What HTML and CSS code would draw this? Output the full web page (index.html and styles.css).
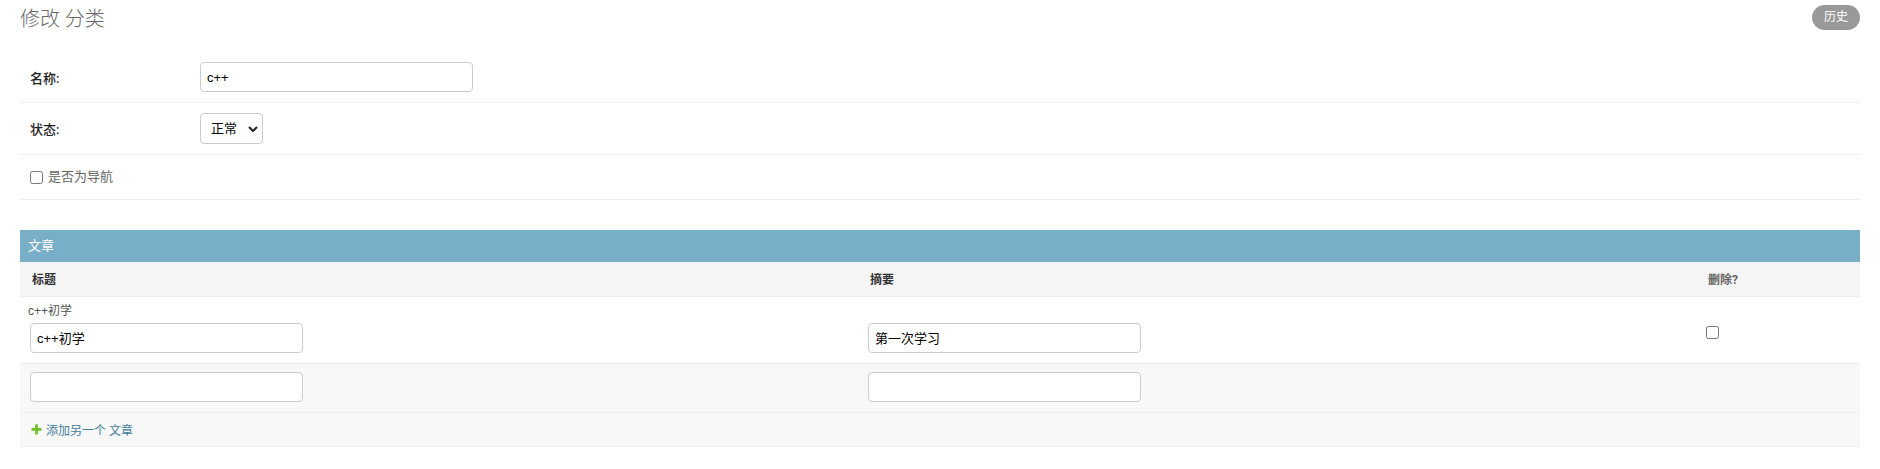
FILE: index.html
```html
<!DOCTYPE html>
<html lang="zh-CN">
<head>
<meta charset="utf-8">
<title>修改 分类</title>
<link rel="stylesheet" href="styles.css">
</head>
<body>
<div class="content">
  <div class="page-head">
    <h1 class="page-title">修改 分类</h1>
    <a class="history-btn">历史</a>
  </div>
  <form class="change-form">
    <fieldset class="module">
      <div class="form-row">
        <label class="field-label required">名称:</label>
        <input class="text-input" type="text" value="c++">
      </div>
      <div class="form-row">
        <label class="field-label required">状态:</label>
        <span class="select-wrap">
          <select class="select-input"><option>正常</option></select>
          <svg class="select-arrow" width="10" height="6" viewBox="0 0 10 6"><path d="M1 1 L5 5 L9 1" fill="none" stroke="#222" stroke-width="2"/></svg>
        </span>
      </div>
      <div class="form-row checkbox-row">
        <input type="checkbox" class="checkbox" id="is_nav">
        <label class="checkbox-label" for="is_nav">是否为导航</label>
      </div>
    </fieldset>

    <div class="inline-group">
      <h2 class="inline-title">文章</h2>
      <table class="inline-table">
        <colgroup><col class="col-title"><col class="col-desc"><col class="col-del"></colgroup>
        <thead>
          <tr>
            <th class="required">标题</th>
            <th class="required">摘要</th>
            <th class="th-del">删除?</th>
          </tr>
        </thead>
        <tbody>
          <tr class="row1 has-original">
            <td class="original">
              <p class="original-text">c++初学</p>
              <input class="text-input" type="text" value="c++初学">
            </td>
            <td><input class="text-input" type="text" value="第一次学习"></td>
            <td><input type="checkbox" class="del-checkbox"></td>
          </tr>
          <tr class="row2">
            <td><input class="text-input" type="text"></td>
            <td><input class="text-input" type="text"></td>
            <td></td>
          </tr>
          <tr class="add-row">
            <td colspan="3">
              <a class="add-link">
                <svg class="add-icon" width="13" height="13" viewBox="0 0 1792 1792"><path fill="#70bf2b" d="M1600 796v192q0 40-28 68t-68 28h-416v416q0 40-28 68t-68 28h-192q-40 0-68-28t-28-68v-416h-416q-40 0-68-28t-28-68v-192q0-40 28-68t68-28h416v-416q0-40 28-68t68-28h192q40 0 68 28t28 68v416h416q40 0 68 28t28 68z"/></svg>
                <span>添加另一个 文章</span>
              </a>
            </td>
          </tr>
        </tbody>
      </table>
    </div>
  </form>
</div>
</body>
</html>
```
FILE: styles.css
```css
* { box-sizing: border-box; }

body {
  margin: 0;
  background: #fff;
  color: #333;
  font-family: Roboto, "Noto Sans CJK SC", "DejaVu Sans", sans-serif;
  font-size: 13px;
}

.content {
  padding: 5px 20px 0;
}

.page-head {
  display: flex;
  justify-content: space-between;
  align-items: flex-start;
}

.page-title {
  margin: 2px 0 0;
  font-size: 20px;
  font-weight: 300;
  line-height: 24px;
  color: #666;
}

.history-btn {
  display: block;
  height: 25px;
  line-height: 25px;
  padding: 0 12px;
  border-radius: 13px;
  background: #999;
  color: #fff;
  font-size: 12px;
  cursor: pointer;
}

.change-form {
  margin-top: 21px;
}

.module {
  border: 0;
  margin: 0;
  padding: 0;
}

.form-row {
  display: flex;
  align-items: center;
  padding: 10px;
  border-bottom: 1px solid #eee;
}

.field-label {
  flex: none;
  width: 170px;
  font-size: 13px;
  color: #333;
}

.field-label.required {
  font-weight: 500;
  color: #222;
}

.text-input {
  width: 273px;
  height: 30px;
  padding: 0 6px;
  border: 1px solid #ccc;
  border-radius: 4px;
  background: #fff;
  color: #000;
  font-family: "Liberation Sans", "Noto Sans CJK SC", sans-serif;
  font-size: 13px;
  margin: 0;
}

.select-wrap {
  position: relative;
  display: inline-block;
}

.select-input {
  -webkit-appearance: none;
  appearance: none;
  height: 31px;
  padding: 0 24px 0 10px;
  border: 1px solid #ccc;
  border-radius: 4px;
  background: #fff;
  color: #000;
  font-family: "Liberation Sans", "Noto Sans CJK SC", sans-serif;
  font-size: 13px;
  margin: 0;
}

.select-arrow {
  position: absolute;
  right: 5px;
  top: 13px;
}

.checkbox-row {
  padding: 10px;
}

.checkbox {
  margin: 0 5px 0 0;
  width: 13px;
  height: 13px;
}

.checkbox-label {
  line-height: 24px;
  color: #666;
  font-size: 13px;
}

.inline-group {
  margin-top: 30px;
}

.inline-title {
  margin: 0;
  height: 32px;
  line-height: 32px;
  padding: 0 8px;
  background: #79aec8;
  color: #fff;
  font-size: 13px;
  font-weight: normal;
}

.inline-table {
  width: 100%;
  border-collapse: collapse;
  table-layout: fixed;
}

.col-title { width: 838px; }
.col-desc { width: 838px; }

.inline-table th {
  text-align: left;
  padding: 0 12px;
  height: 34px;
  background: #f5f5f5;
  border-bottom: 1px solid #eee;
  font-size: 12px;
  font-weight: bold;
  color: #333;
}

.inline-table th.th-del {
  color: #666;
}

.inline-table td {
  padding: 8px 10px 10px;
  border-bottom: 1px solid #eee;
  vertical-align: top;
}

.row1 td {
  padding-top: 26px;
  background: #fff;
}

.row2 td {
  background: #f8f8f8;
}

.original {
  position: relative;
}

.original-text {
  position: absolute;
  top: 2px;
  left: 0;
  margin: 0;
  padding: 6px 8px 0;
  height: 17px;
  overflow: hidden;
  font-family: "Liberation Sans", "Noto Sans CJK SC", sans-serif;
  font-size: 12px;
  line-height: 13px;
  color: #555;
}

.del-checkbox {
  margin: 3px 0 0;
  width: 13px;
  height: 13px;
}

.inline-table .add-row td {
  background: #f8f8f8;
  padding: 8px 10px;
}

.add-link {
  display: flex;
  align-items: center;
  gap: 3px;
  height: 17px;
  color: #447e9b;
  font-size: 12px;
  cursor: pointer;
}

.add-icon {
  flex: none;
}
```
